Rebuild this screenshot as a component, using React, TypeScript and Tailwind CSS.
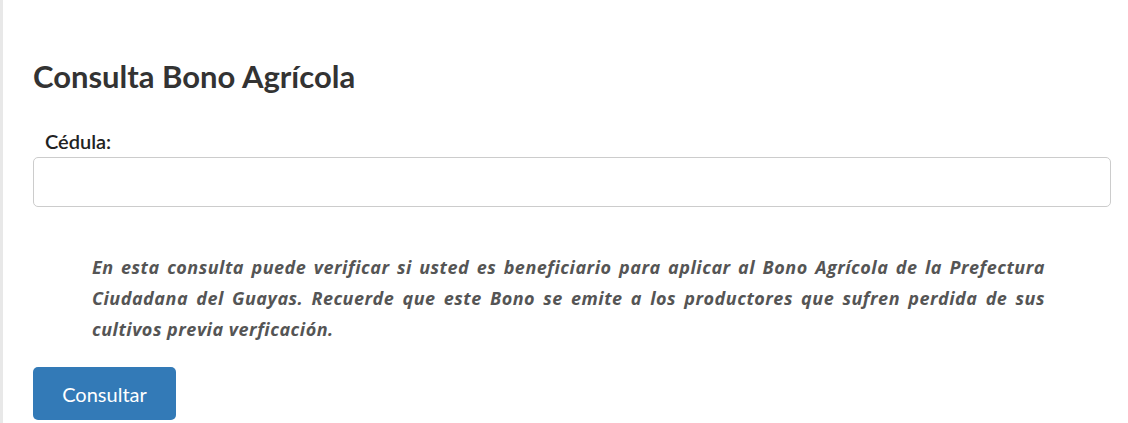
export default function App() {
  return (
    <div className="min-h-[423px] w-full bg-white border-l-[3px] border-[#e8e8e8] font-['Lato',sans-serif] text-[#333]">
      <div className="pl-[30px] pr-[17px] pt-[58px]">
        <h1 className="text-[31px] font-bold leading-[36px] text-[#333]">Consulta Bono Agrícola</h1>

        <div className="mt-[35px]">
          <label className="block pl-3 text-[20px] font-semibold leading-[24px] text-[#222]">Cédula:</label>
          <input
            type="text"
            className="mt-[4px] block h-[50px] w-full rounded-[5px] border border-[#ccc] bg-white px-3 outline-none"
          />
        </div>

        <p className="mt-[45px] pl-[59px] pr-[66px] text-justify font-['Open_Sans',sans-serif] text-[18px] font-bold italic leading-[31px] tracking-[0.5px] text-[#555]">
          En esta consulta puede verificar si usted es beneficiario para aplicar al Bono Agrícola de la Prefectura
          Ciudadana del Guayas. Recuerde que este Bono se emite a los productores que sufren perdida de sus
          cultivos previa verficación.
        </p>

        <button className="mt-[22px] h-[53px] w-[143px] rounded-[5px] bg-[#337ab7] text-[20px] text-white">
          Consultar
        </button>
      </div>
    </div>
  )
}
